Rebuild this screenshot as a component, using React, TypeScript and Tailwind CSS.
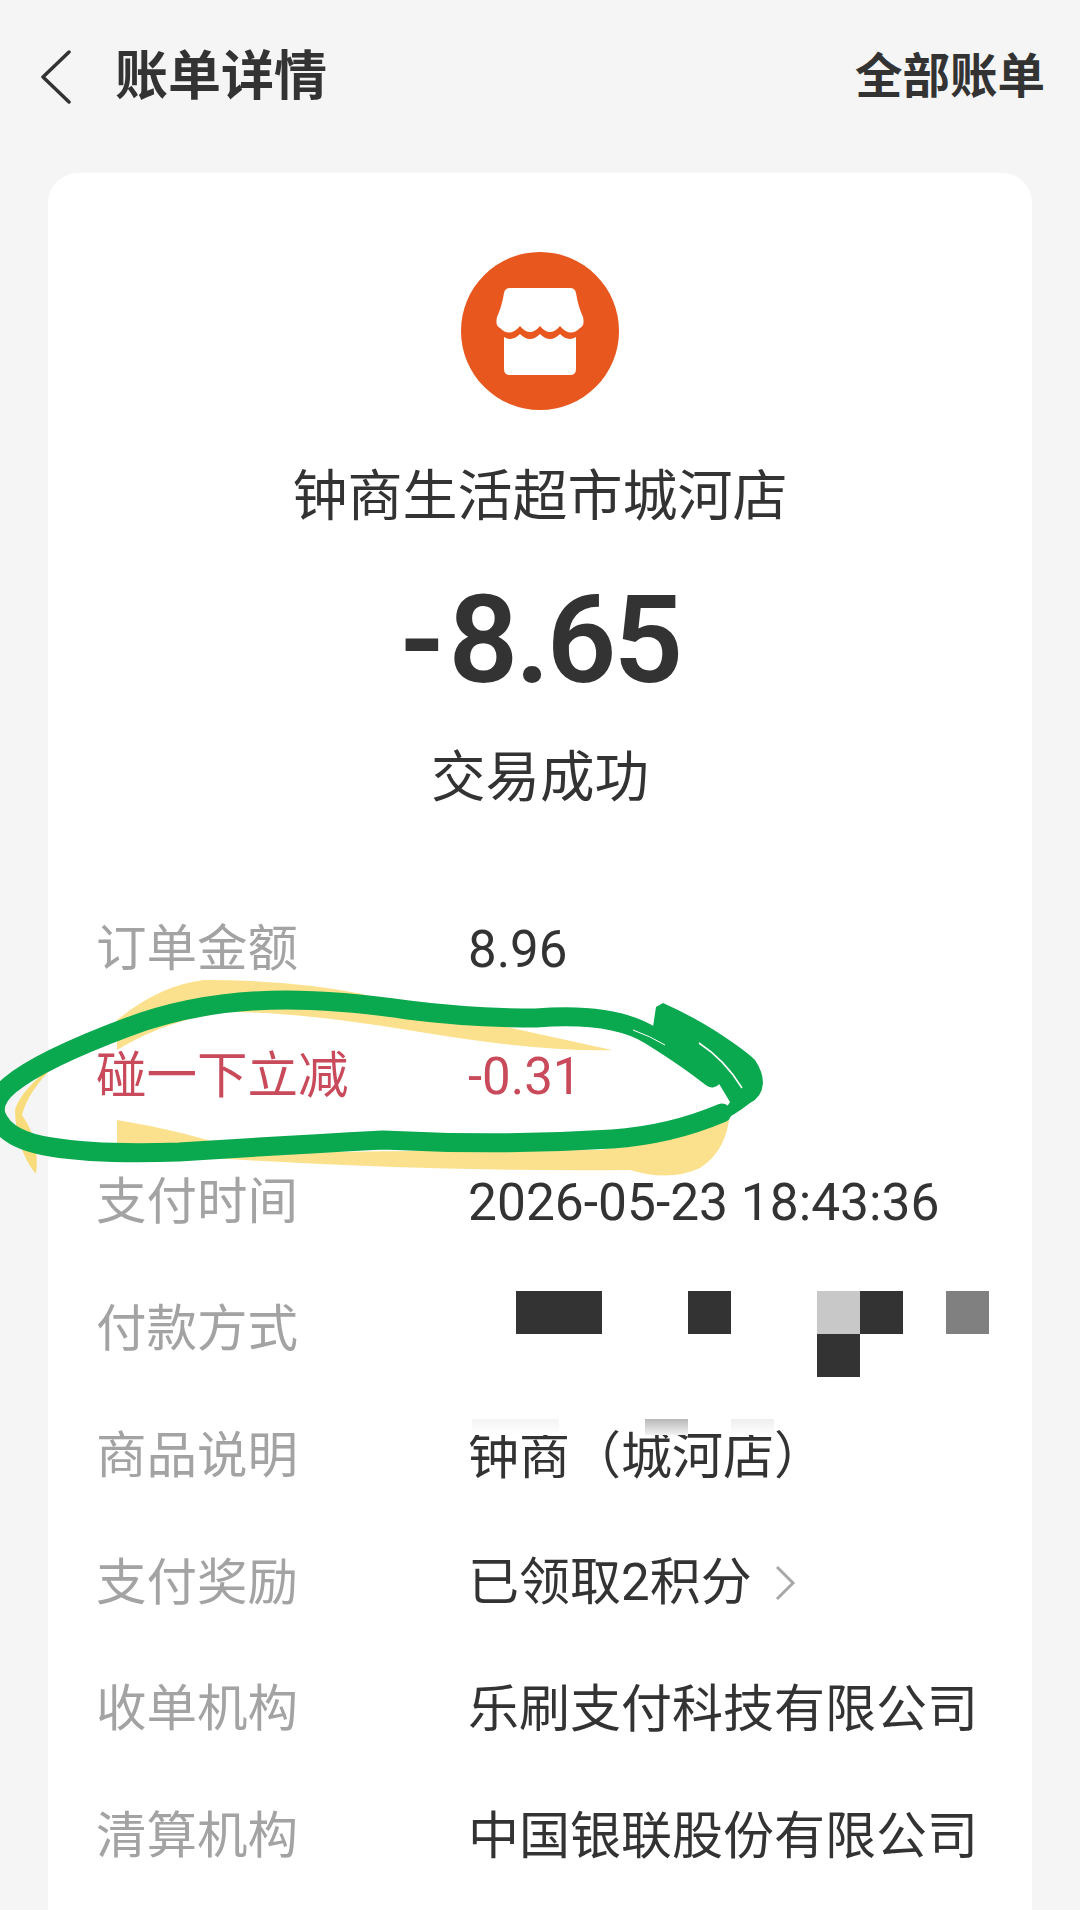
import React from "react";

const CJK = "font-['Roboto','Noto_Sans_CJK_SC',sans-serif]";

function Row({ label, children, red }: { label: string; children?: React.ReactNode; red?: boolean }) {
  return (
    <div className="flex h-[126.7px] items-center">
      <div className={`w-[372px] shrink-0 text-[50.5px] leading-none ${red ? "text-[#c94a5a]" : "text-[#a3a3a3]"}`}>{label}</div>
      <div className={`flex items-center text-[51px] leading-none whitespace-nowrap ${red ? "text-[#c94a5a]" : "text-[#333333]"}`}>{children}</div>
    </div>
  );
}

export default function App() {
  return (
    <div className={`relative h-[1910px] w-[1080px] overflow-hidden bg-[#f5f5f5] ${CJK}`}>
      <header className="flex h-[173px] items-start justify-between pl-[40px] pr-[35px] pt-[50px]">
        <div className="flex items-center">
          <svg width="32" height="54" viewBox="0 0 32 54" fill="none" stroke="#333333" strokeWidth="3.5" strokeLinejoin="round" strokeLinecap="round">
            <path d="M29 2 L3 27 L29 52" />
          </svg>
          <h1 className="ml-[43px] text-[53px] font-bold leading-none text-[#333333]">账单详情</h1>
        </div>
        <div className="mt-[4px] text-[47.5px] font-bold leading-none text-[#333333]">全部账单</div>
      </header>

      <main className="mx-[48px] h-[1737px] rounded-t-[30px] bg-white">
        <div className="flex flex-col items-center pt-[79px]">
          <div className="flex h-[158px] w-[158px] items-center justify-center rounded-full bg-[#e8571e]">
            <svg width="90" height="90" viewBox="0 0 90 90" fill="white">
              <path d="M15 2 H75 Q80 2 81 7 Q83 20 88 31 Q90 40 85 42 Q75 52 65 40 Q55 52 45 40 Q35 52 25 40 Q15 52 5 42 Q0 40 2 31 Q7 20 9 7 Q10 2 15 2 Z" />
              <path d="M9 51 Q17 56 25 48 Q35 58 45 48 Q55 58 65 48 Q73 56 81 51 V83 Q81 89 75 89 H15 Q9 89 9 83 Z" />
            </svg>
          </div>
          <div className="mt-[50px] text-[55px] leading-[72px] text-[#333333]">钟商生活超市城河店</div>
          <div className="mt-[49px] flex text-[122px] font-semibold leading-[120px] text-[#333333]">
            <span className="mr-[4px]">-</span>
            <span className="tracking-[-3px]">8.65</span>
          </div>
          <div className="mt-[40px] text-[54.5px] leading-[72px] text-[#333333]">交易成功</div>
        </div>

        <div className="mt-[73px] pl-[48px]">
          <Row label="订单金额">8.96</Row>
          <Row label="碰一下立减" red>-0.31</Row>
          <Row label="支付时间"><span className="text-[51.5px]">2026-05-23 18:43:36</span></Row>
          <Row label="付款方式">
            <div className="ml-[48px] mt-[10px] grid grid-cols-[repeat(11,43px)] grid-rows-[43px_43px]">
              <div className="bg-[#333333]" />
              <div className="bg-[#333333]" />
              <div className="col-start-5 bg-[#333333]" />
              <div className="col-start-8 bg-[#c8c8c8]" />
              <div className="bg-[#333333]" />
              <div className="col-start-11 bg-[#808080]" />
              <div className="col-start-8 row-start-2 bg-[#333333]" />
            </div>
          </Row>
          <Row label="商品说明">
            <span className="relative">
              钟商（城河店）
              <span className="absolute left-[4px] top-[-12px] h-[16px] w-[87px] bg-gradient-to-b from-[#f4f4f4] to-white" />
              <span className="absolute left-[177px] top-[-12px] h-[16px] w-[43px] bg-gradient-to-b from-[#b8b8b8] to-[#f2f2f2]" />
              <span className="absolute left-[263px] top-[-12px] h-[16px] w-[43px] bg-gradient-to-b from-[#eeeeee] to-white" />
            </span>
          </Row>
          <Row label="支付奖励">
            已领取2积分
            <svg className="ml-[22px]" width="22" height="36" viewBox="0 0 22 36" fill="none" stroke="#a8a8a8" strokeWidth="3">
              <path d="M3 2 L19 18 L3 34" />
            </svg>
          </Row>
          <Row label="收单机构">乐刷支付科技有限公司</Row>
          <Row label="清算机构">中国银联股份有限公司</Row>
        </div>
      </main>

      <svg className="pointer-events-none absolute left-0 top-0" width="1080" height="1910" viewBox="0 0 1080 1910" fill="none">
        <path
          fill="#f9d45c"
          fillOpacity="0.7"
          d="M117 1020 Q160 985 204 980 Q290 980 357 993 Q450 1015 612 1050 Q540 1052 420 1032 Q300 1012 230 1012 Q170 1018 117 1050 Z"
        />
        <path fill="#f9d45c" fillOpacity="0.7" d="M117 1120 Q180 1130 240 1150 L117 1145 Z" />
        <path
          fill="#f9d45c"
          fillOpacity="0.7"
          d="M170 1155 Q400 1150 600 1150 Q680 1140 730 1110 Q728 1150 700 1168 Q670 1182 630 1170 Q400 1172 170 1155 Z"
        />
        <path fill="#f9d45c" fillOpacity="0.8" d="M60 1060 Q20 1090 15 1110 Q16 1150 36 1174 Q40 1140 22 1115 Q28 1090 60 1060 Z" />
        <path
          stroke="#0aa84f"
          strokeWidth="19"
          strokeLinecap="round"
          strokeLinejoin="round"
          d="M722 1113 Q670 1135 612 1139 Q500 1146 383 1140 Q270 1146 179 1152 Q100 1155 51 1147 Q5 1140 -4 1115 Q-8 1100 10 1085 Q40 1060 128 1027 Q200 1000 286 1000 Q340 1000 408 1010 Q470 1018 536 1018 Q612 1012 650 1035 Q690 1060 712 1078"
        />
        <path
          fill="#0aa84f"
          d="M656 1007 L663 1003 Q690 1015 714 1030 Q745 1050 755 1060 Q763 1072 763 1083 Q762 1097 750 1103 Q735 1115 716 1124 L730 1102 L718 1082 L679 1060 Q660 1045 653 1027 Z"
        />
        <path stroke="#ffffff" strokeWidth="1.5" d="M699 1043 Q725 1060 742 1088" />
        <path stroke="#ffffff" strokeWidth="1" d="M633 1030 Q650 1036 665 1045" />
      </svg>
    </div>
  );
}
